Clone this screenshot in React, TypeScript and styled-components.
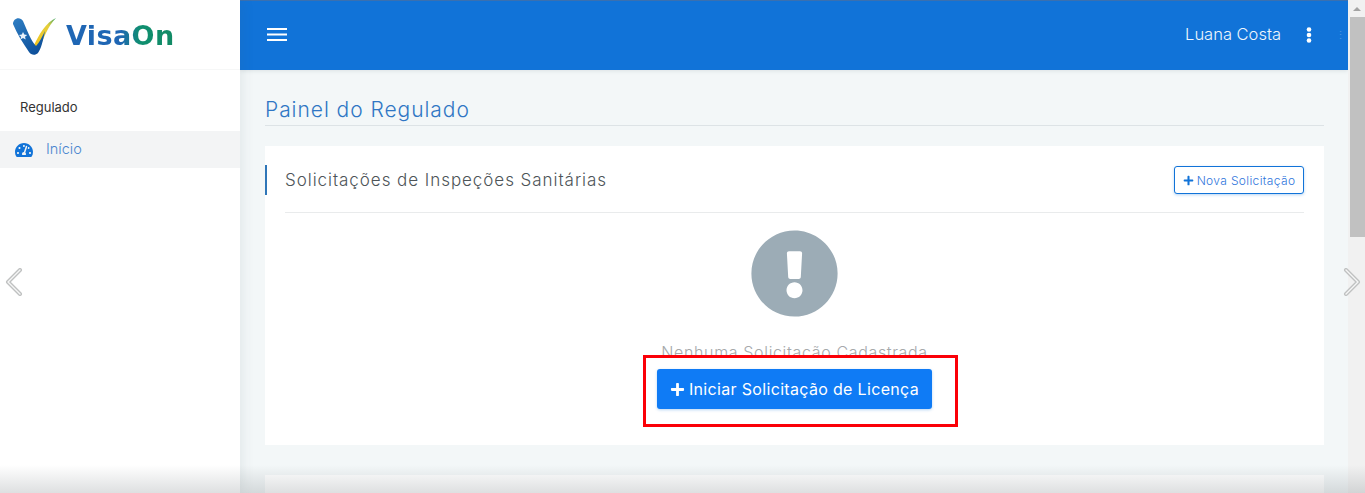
import React from 'react'
import styled, { createGlobalStyle } from 'styled-components'
import { FaExclamationCircle, FaPlus, FaTachometerAlt } from 'react-icons/fa'

const GlobalStyle = createGlobalStyle`
  html, body {
    margin: 0;
    padding: 0;
    height: 493px;
    overflow: hidden;
    background: #f3f7f8;
    font-family: Inter, "Open Sans", "Liberation Sans", sans-serif;
  }
`

const Logo = () => (
  <LogoWrap>
    <svg width="46" height="40" viewBox="0 0 46 40">
      <defs>
        <linearGradient id="vBlue" x1="0" y1="0" x2="0.7" y2="1">
          <stop offset="0" stopColor="#2f7fc4" />
          <stop offset="1" stopColor="#0d4f9a" />
        </linearGradient>
        <linearGradient id="vTick" x1="0" y1="1" x2="1" y2="0">
          <stop offset="0" stopColor="#f1c21b" />
          <stop offset="0.7" stopColor="#e6cf3a" />
          <stop offset="1" stopColor="#3aa76d" />
        </linearGradient>
      </defs>
      <path d="M22 28 C27 18 34 5 44 1 C36 9 31 22 27 33 L22 33 Z" fill="url(#vTick)" />
      <path d="M1 7 C1 1 8 -1 11 4 C15 13 19 24 24 29 C27 26 30 20 33 14 C31 24 29 32 26 36 C23 39 19 38 17 35 C11 26 5 17 1 7 Z" fill="url(#vBlue)" />
      <path d="M11 15 l1.3 2.6 2.9.3 -2.2 1.9 .7 2.8 -2.7-1.5 -2.6 1.5 .7-2.8 -2.2-1.9 2.9-.3 Z" fill="#e8f1fa" />
    </svg>
    <LogoText>VisaOn</LogoText>
  </LogoWrap>
)

const App = () => {
  return (
    <Page>
      <GlobalStyle />
      <Sidebar>
        <Logo />
        <SectionLabel>Regulado</SectionLabel>
        <MenuItem>
          <FaTachometerAlt size={18} color="#1173d8" />
          <MenuText>Início</MenuText>
        </MenuItem>
      </Sidebar>

      <Main>
        <TopBar>
          <svg width="20" height="14" viewBox="0 0 20 14">
            <rect y="0" width="20" height="2" fill="#fff" />
            <rect y="5.5" width="20" height="2" fill="#fff" />
            <rect y="11" width="20" height="2" fill="#fff" />
          </svg>
          <UserBox>
            <UserName>Luana Costa</UserName>
            <svg width="6" height="16" viewBox="0 0 6 16">
              <circle cx="3" cy="2.5" r="2.3" fill="#fff" />
              <circle cx="3" cy="8" r="2.3" fill="#fff" />
              <circle cx="3" cy="13.5" r="2.3" fill="#fff" />
            </svg>
            <FaintDots>⋮</FaintDots>
          </UserBox>
        </TopBar>

        <Content>
          <PageTitle>Painel do Regulado</PageTitle>
          <Card>
            <CardHeader>
              <CardTitle>Solicitações de Inspeções Sanitárias</CardTitle>
              <OutlineButton>
                <FaPlus size={11} color="#1173d8" />
                Nova Solicitação
              </OutlineButton>
            </CardHeader>
            <Divider />
            <EmptyState>
              <FaExclamationCircle size={89} color="#9cacb6" />
              <EmptyText>Nenhuma Solicitação Cadastrada</EmptyText>
              <Highlight>
                <PrimaryButton>
                  <FaPlus size={15} color="#fff" />
                  Iniciar Solicitação de Licença
                </PrimaryButton>
              </Highlight>
            </EmptyState>
          </Card>
          <NextCard />
        </Content>
      </Main>

      <ScrollBar>
        <ScrollArrow />
        <ScrollThumb />
      </ScrollBar>

      <BottomFade />
      <Chevron $side="left" width="18" height="28" viewBox="0 0 18 28">
        <path d="M15 2 L3 14 L15 26" fill="none" stroke="#bfc1c1" strokeWidth="4" strokeLinecap="round" strokeLinejoin="round" />
        <path d="M15 2 L3 14 L15 26" fill="none" stroke="#f6f6f6" strokeWidth="1.4" strokeLinecap="round" strokeLinejoin="round" />
      </Chevron>
      <Chevron $side="right" width="18" height="28" viewBox="0 0 18 28">
        <path d="M3 2 L15 14 L3 26" fill="none" stroke="#bfc1c1" strokeWidth="4" strokeLinecap="round" strokeLinejoin="round" />
        <path d="M3 2 L15 14 L3 26" fill="none" stroke="#f6f6f6" strokeWidth="1.4" strokeLinecap="round" strokeLinejoin="round" />
      </Chevron>
    </Page>
  )
}

const Page = styled.div`
  position: relative;
  display: flex;
  width: 1365px;
  height: 493px;
  overflow: hidden;
`

const Sidebar = styled.aside`
  flex: 0 0 240px;
  background: #fff;
  box-shadow: 0 0 14px rgba(60, 80, 90, 0.12);
  z-index: 1;
`

const LogoWrap = styled.div`
  display: flex;
  align-items: center;
  gap: 8px;
  height: 70px;
  padding: 4px 0 0 12px;
  box-sizing: border-box;
  border-bottom: 1px solid #f6f7f7;
`

const LogoText = styled.span`
  margin-top: -3px;
  font-family: "DejaVu Sans", sans-serif;
  font-weight: 700;
  font-size: 27px;
  letter-spacing: 0.4px;
  background: linear-gradient(90deg, #1f66b4 0%, #1f66b4 50%, #0f8f70 68%, #128a64 100%);
  -webkit-background-clip: text;
  background-clip: text;
  color: transparent;
`

const SectionLabel = styled.div`
  padding: 29px 20px 16px;
  font-size: 13px;
  line-height: 16px;
  color: #333;
`

const MenuItem = styled.div`
  display: flex;
  align-items: center;
  gap: 13px;
  height: 37px;
  padding-left: 15px;
  background: #f3f4f5;
`

const MenuText = styled.span`
  margin-top: -2px;
  font-size: 14.5px;
  font-weight: 300;
  color: #4a86cf;
`

const Main = styled.main`
  flex: 0 0 1108px;
  display: flex;
  flex-direction: column;
  background: #f3f7f8;
`

const TopBar = styled.header`
  flex: 0 0 70px;
  display: flex;
  align-items: center;
  justify-content: space-between;
  padding: 0 0 2px 27px;
  box-sizing: border-box;
  background: #1173d8;
  border-top: 1px solid #3a70b0;
  box-shadow: 0 1px 4px rgba(60, 80, 90, 0.12);
`

const UserBox = styled.div`
  display: flex;
  align-items: center;
  padding-right: 7px;
`

const UserName = styled.span`
  margin: -1px 25px 0 0;
  font-size: 16.5px;
  font-weight: 300;
  color: #eef5fc;
`

const FaintDots = styled.span`
  width: 6px;
  margin-left: 23px;
  font-size: 11px;
  color: #4d93dd;
`

const Content = styled.div`
  padding: 0 24px 0 25px;
`

const PageTitle = styled.h1`
  margin: 26px 0 20px;
  padding-bottom: 2px;
  font-size: 21px;
  line-height: 27px;
  font-weight: 300;
  letter-spacing: 0.95px;
  color: #2f76c4;
  border-bottom: 1px solid #dde3e6;
`

const Card = styled.section`
  height: 299px;
  background: #fff;
  padding-top: 19px;
  box-sizing: border-box;
`

const CardHeader = styled.div`
  display: flex;
  align-items: center;
  justify-content: space-between;
  height: 30px;
  padding: 0 20px 0 18px;
  border-left: 2px solid #2f76b8;
`

const CardTitle = styled.h2`
  margin: 0;
  font-size: 17px;
  font-weight: 300;
  letter-spacing: 0.95px;
  color: #4d5458;
`

const OutlineButton = styled.button`
  display: flex;
  align-items: center;
  justify-content: center;
  gap: 3px;
  width: 130px;
  height: 28px;
  padding: 0;
  background: #fff;
  border: 1px solid #1173d8;
  border-radius: 3px;
  box-shadow: 0 1px 3px rgba(17, 115, 216, 0.3);
  font-family: inherit;
  font-size: 12px;
  font-weight: 300;
  letter-spacing: 0.35px;
  color: #2f76dc;
`

const Divider = styled.hr`
  margin: 17px 20px 0;
  border: 0;
  border-top: 1px solid #e9ebec;
`

const EmptyState = styled.div`
  display: flex;
  flex-direction: column;
  align-items: center;
  padding-top: 16px;
`

const EmptyText = styled.div`
  height: 14px;
  margin-top: 23px;
  overflow: hidden;
  font-size: 16px;
  line-height: 22px;
  font-weight: 300;
  letter-spacing: 0.65px;
  color: #a6a9ab;
  white-space: nowrap;
`

const Highlight = styled.div`
  display: flex;
  flex: none;
  width: 315px;
  height: 72px;
  margin-left: 12px;
  padding: 11px 23px 15px 11px;
  box-sizing: border-box;
  background: #fff;
  border: 3px solid #fb0007;
`

const PrimaryButton = styled.button`
  display: flex;
  align-items: center;
  justify-content: center;
  gap: 4px;
  width: 100%;
  height: 40px;
  padding: 0;
  background: #0f7bf5;
  border: 0;
  border-radius: 3px;
  box-shadow: 0 1px 3px rgba(17, 115, 216, 0.3);
  font-family: inherit;
  font-size: 16px;
  letter-spacing: 0.33px;
  color: #fff;
`

const NextCard = styled.div`
  height: 60px;
  margin-top: 30px;
  background: #fff;
`

const ScrollBar = styled.div`
  flex: 0 0 17px;
  background: #f1f1f1;
  z-index: 1;
`

const ScrollArrow = styled.div`
  width: 0;
  height: 0;
  margin: 7px auto 0;
  border-left: 4px solid transparent;
  border-right: 4px solid transparent;
  border-bottom: 4px solid #a3a3a3;
`

const ScrollThumb = styled.div`
  height: 220px;
  margin: 6px 0 0 2px;
  background: #c1c1c1;
`

const BottomFade = styled.div`
  position: absolute;
  left: 0;
  right: 0;
  bottom: 0;
  height: 28px;
  background: linear-gradient(rgba(70, 80, 85, 0), rgba(70, 80, 85, 0.18));
  z-index: 2;
  pointer-events: none;
`

const Chevron = styled.svg<{ $side: 'left' | 'right' }>`
  position: absolute;
  top: 268px;
  ${p => (p.$side === 'left' ? 'left: 5px;' : 'right: 4px;')}
  z-index: 3;
`

export default App
